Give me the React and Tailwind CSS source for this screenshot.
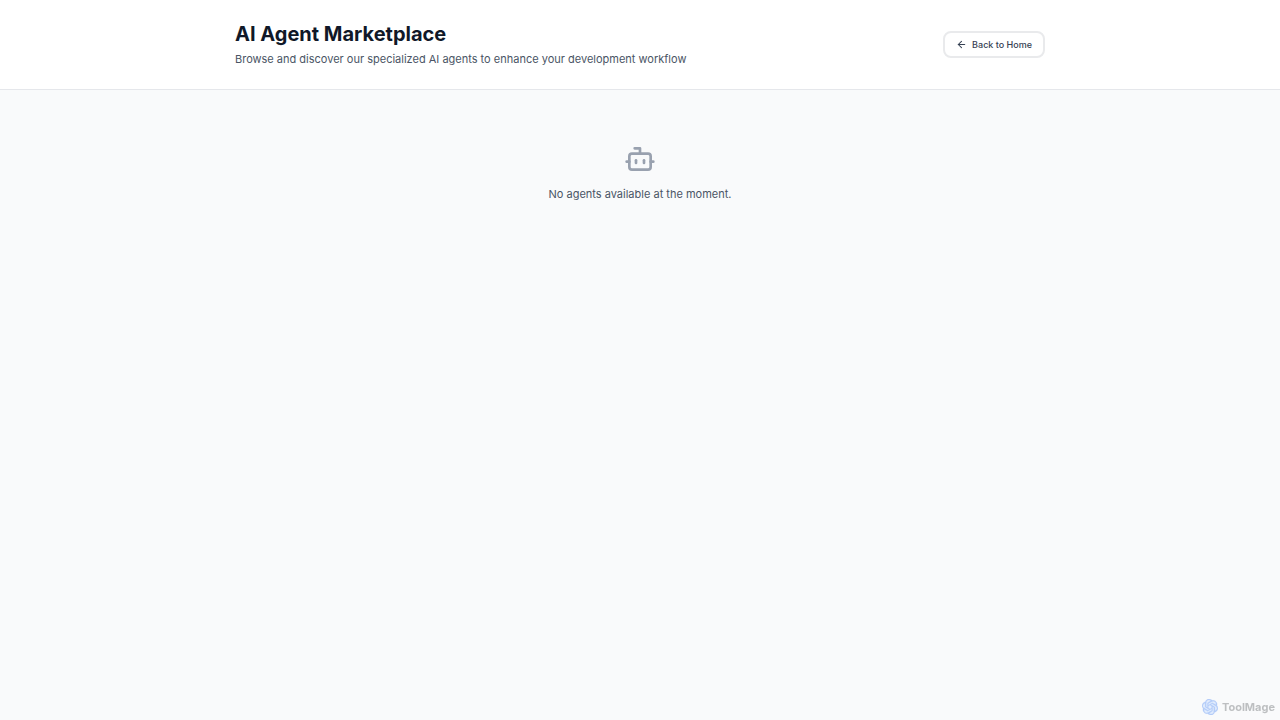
import { ArrowLeft, Bot } from "lucide-react";
import { SiOpenai } from "react-icons/si";

function Header() {
  return (
    <header className="border-b border-gray-200 bg-white">
      <div className="mx-auto flex max-w-[852px] items-center justify-between px-[21px] py-[21px]">
        <div>
          <h1 className="text-[20px] leading-[26px] font-bold text-gray-900">AI Agent Marketplace</h1>
          <p className="mt-1 text-[11px] leading-[17px] text-gray-600">
            Browse and discover our specialized AI agents to enhance your development workflow
          </p>
        </div>
        <a
          href="#home"
          className="flex h-[27px] items-center gap-[5px] rounded-lg border-2 border-[#e9eaec] bg-white px-[11px] text-[9px] font-medium text-gray-700"
        >
          <ArrowLeft size={11} strokeWidth={2.25} aria-hidden="true" />
          Back to Home
        </a>
      </div>
    </header>
  );
}

function EmptyState() {
  return (
    <div className="flex flex-col items-center gap-[11px] py-[53px] text-center">
      <Bot size={32} className="text-gray-400" aria-hidden="true" />
      <p className="text-[11px] leading-4 text-gray-600">No agents available at the moment.</p>
    </div>
  );
}

function KnotLogo() {
  return (
    <svg width="16" height="16" viewBox="0 0 24 24" aria-hidden="true">
      <path d="M12 1 21.5 6.5V17.5L12 23 2.5 17.5V6.5Z" fill="#e3edfd" />
      <SiOpenai size={24} color="#b3ccf8" stroke="#b3ccf8" strokeWidth="0.5" />
    </svg>
  );
}

export default function App() {
  return (
    <div className="flex min-h-screen flex-col bg-gray-50 font-['Inter',sans-serif]">
      <Header />
      <main className="flex-1">
        <EmptyState />
      </main>
      <div className="fixed right-[5px] bottom-1 flex items-center gap-1 text-[11px] leading-[18px] font-bold text-[#bdbfc1]">
        <KnotLogo />
        ToolMage
      </div>
    </div>
  );
}
